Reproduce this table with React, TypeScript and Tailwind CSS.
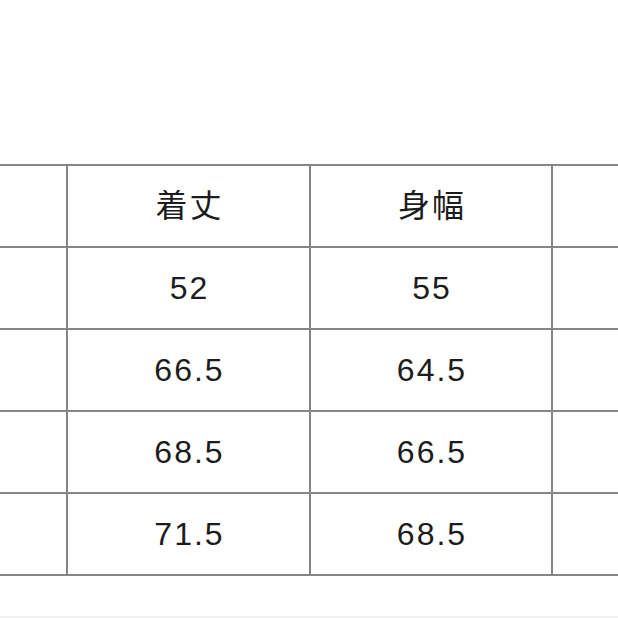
const rows: [string, string][] = [
  ["着丈", "身幅"],
  ["52", "55"],
  ["66.5", "64.5"],
  ["68.5", "66.5"],
  ["71.5", "68.5"],
];

export default function App() {
  return (
    <div
      className="w-[618px] h-[618px] overflow-hidden bg-white flex flex-col text-[#1c1c1c] text-[32px] tracking-[2px]"
      style={{ fontFamily: '"Liberation Sans", "Noto Sans CJK JP", sans-serif' }}
    >
      <div className="mt-[164px] border-t-2 border-[#858585] grid grid-cols-[68px_243px_242px_200px] w-[753px]">
        {rows.map((row, i) => (
          <div key={i} className="contents">
            <div className="h-[82px] border-r-2 border-b-2 border-[#858585]" />
            <div className="h-[82px] border-r-2 border-b-2 border-[#858585] flex items-center justify-center pl-[2px]">
              {row[0]}
            </div>
            <div className="h-[82px] border-r-2 border-b-2 border-[#858585] flex items-center justify-center pl-[2px]">
              {row[1]}
            </div>
            <div className="h-[82px] border-b-2 border-[#858585]" />
          </div>
        ))}
      </div>
      <div className="flex-1" />
      <div className="h-[2px] bg-[#f1f1f1]" />
    </div>
  );
}
